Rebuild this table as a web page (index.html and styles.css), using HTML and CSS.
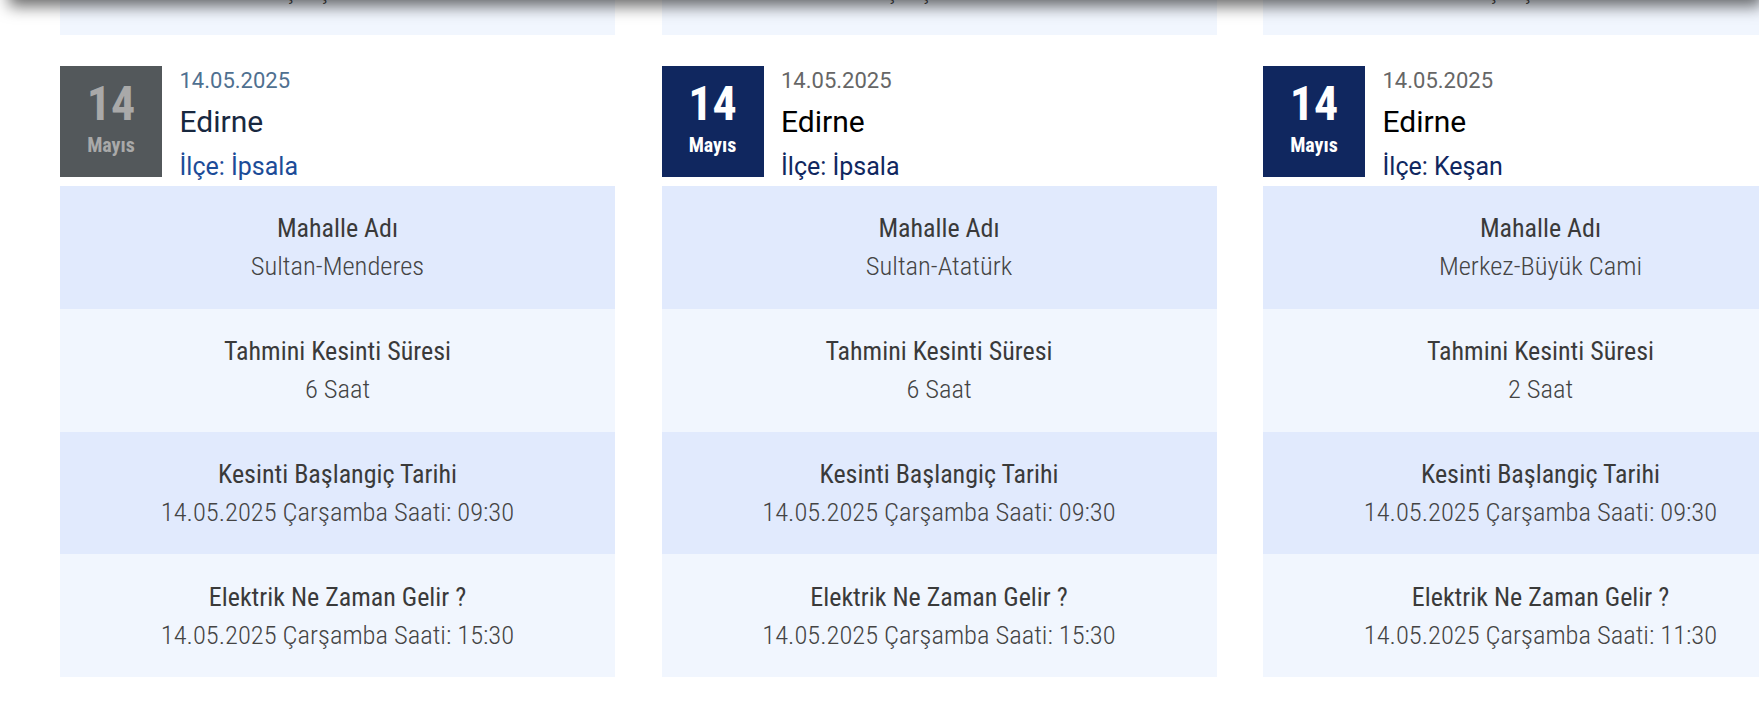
FILE: index.html
```html
<!DOCTYPE html>
<html lang="tr">
<head>
<meta charset="utf-8">
<title>Elektrik Kesintileri</title>
<link rel="stylesheet" href="styles.css">
</head>
<body>
<div class="topbar"></div>
<main class="page">
  <section class="grid prev">
    <div class="card">
      <div class="row even"><div class="label">Elektrik Ne Zaman Gelir ?</div><div class="value">14.05.2025 Çarşamba Saati: 15:30</div></div>
    </div>
    <div class="card">
      <div class="row even"><div class="label">Elektrik Ne Zaman Gelir ?</div><div class="value">14.05.2025 Çarşamba Saati: 15:30</div></div>
    </div>
    <div class="card">
      <div class="row even"><div class="label">Elektrik Ne Zaman Gelir ?</div><div class="value">14.05.2025 Çarşamba Saati: 15:30</div></div>
    </div>
  </section>

  <section class="grid">
    <article class="card card-past">
      <div class="head">
        <div class="datebox"><span class="day">14</span><span class="month">Mayıs</span></div>
        <div class="meta">
          <div class="date">14.05.2025</div>
          <div class="city">Edirne</div>
          <div class="district">İlçe: İpsala</div>
        </div>
      </div>
      <div class="row odd"><div class="label">Mahalle Adı</div><div class="value">Sultan-Menderes</div></div>
      <div class="row even"><div class="label">Tahmini Kesinti Süresi</div><div class="value">6 Saat</div></div>
      <div class="row odd"><div class="label">Kesinti Başlangiç Tarihi</div><div class="value">14.05.2025 Çarşamba Saati: 09:30</div></div>
      <div class="row even"><div class="label">Elektrik Ne Zaman Gelir ?</div><div class="value">14.05.2025 Çarşamba Saati: 15:30</div></div>
    </article>

    <article class="card">
      <div class="head">
        <div class="datebox"><span class="day">14</span><span class="month">Mayıs</span></div>
        <div class="meta">
          <div class="date">14.05.2025</div>
          <div class="city">Edirne</div>
          <div class="district">İlçe: İpsala</div>
        </div>
      </div>
      <div class="row odd"><div class="label">Mahalle Adı</div><div class="value">Sultan-Atatürk</div></div>
      <div class="row even"><div class="label">Tahmini Kesinti Süresi</div><div class="value">6 Saat</div></div>
      <div class="row odd"><div class="label">Kesinti Başlangiç Tarihi</div><div class="value">14.05.2025 Çarşamba Saati: 09:30</div></div>
      <div class="row even"><div class="label">Elektrik Ne Zaman Gelir ?</div><div class="value">14.05.2025 Çarşamba Saati: 15:30</div></div>
    </article>

    <article class="card">
      <div class="head">
        <div class="datebox"><span class="day">14</span><span class="month">Mayıs</span></div>
        <div class="meta">
          <div class="date">14.05.2025</div>
          <div class="city">Edirne</div>
          <div class="district">İlçe: Keşan</div>
        </div>
      </div>
      <div class="row odd"><div class="label">Mahalle Adı</div><div class="value">Merkez-Büyük Cami</div></div>
      <div class="row even"><div class="label">Tahmini Kesinti Süresi</div><div class="value">2 Saat</div></div>
      <div class="row odd"><div class="label">Kesinti Başlangiç Tarihi</div><div class="value">14.05.2025 Çarşamba Saati: 09:30</div></div>
      <div class="row even"><div class="label">Elektrik Ne Zaman Gelir ?</div><div class="value">14.05.2025 Çarşamba Saati: 11:30</div></div>
    </article>
  </section>
</main>
</body>
</html>
```

FILE: styles.css
```css
html, body {
  margin: 0;
  padding: 0;
  background: #ffffff;
  overflow: hidden;
}

body {
  font-family: Roboto, "Noto Sans", sans-serif;
  color: #333333;
}

.topbar {
  position: fixed;
  top: -40px;
  left: 12px;
  right: 0;
  height: 40px;
  background: #ffffff;
  box-shadow: 0 3px 16px 3px rgba(0, 0, 0, 0.6);
  z-index: 10;
}

.page {
  padding-left: 60px;
}

.grid {
  display: grid;
  grid-template-columns: repeat(3, 555px);
  column-gap: 46.5px;
}

.prev {
  margin-top: -87.75px;
  margin-bottom: 31px;
}

.prev .row {
  padding-bottom: 6px;
  box-sizing: border-box;
}

.card {
  display: flex;
  flex-direction: column;
}

.head {
  display: flex;
  height: 111px;
  margin-bottom: 9px;
}

.datebox {
  width: 102px;
  height: 111px;
  flex: none;
  background: #10275f;
  color: #ffffff;
  display: flex;
  flex-direction: column;
  align-items: center;
  font-family: "Roboto Condensed", Roboto, sans-serif;
  font-stretch: condensed;
  font-weight: 700;
}

.day {
  font-size: 48px;
  line-height: 48px;
  padding-top: 14px;
}

.month {
  font-size: 20px;
  line-height: 24px;
  margin-top: 4.5px;
}

.meta {
  margin-left: 17.5px;
  display: flex;
  flex-direction: column;
}

.date {
  font-size: 22px;
  line-height: 30px;
  color: #666666;
}

.city {
  font-size: 30px;
  line-height: 44px;
  margin-top: 4px;
  color: #000000;
}

.district {
  font-size: 25px;
  line-height: 28px;
  margin-top: 9px;
  color: #10275f;
}

.card-past .datebox {
  background: #53585b;
  color: #a9a9a9;
}

.card-past .date {
  color: #4f7090;
}

.card-past .city {
  color: #18283f;
}

.card-past .district {
  color: #1c4c98;
}

.row {
  height: 122.75px;
  display: flex;
  flex-direction: column;
  justify-content: center;
  align-items: center;
  text-align: center;
  font-family: "Roboto Condensed", Roboto, sans-serif;
  font-stretch: condensed;
  font-size: 26px;
  line-height: 38px;
  white-space: nowrap;
}

.odd {
  background: #e1eafd;
}

.even {
  background: #f1f6fe;
}

.label {
  font-weight: 400;
  color: #3a3a3a;
}

.value {
  font-size: 26.5px;
  font-weight: 300;
  color: #444444;
}
```
